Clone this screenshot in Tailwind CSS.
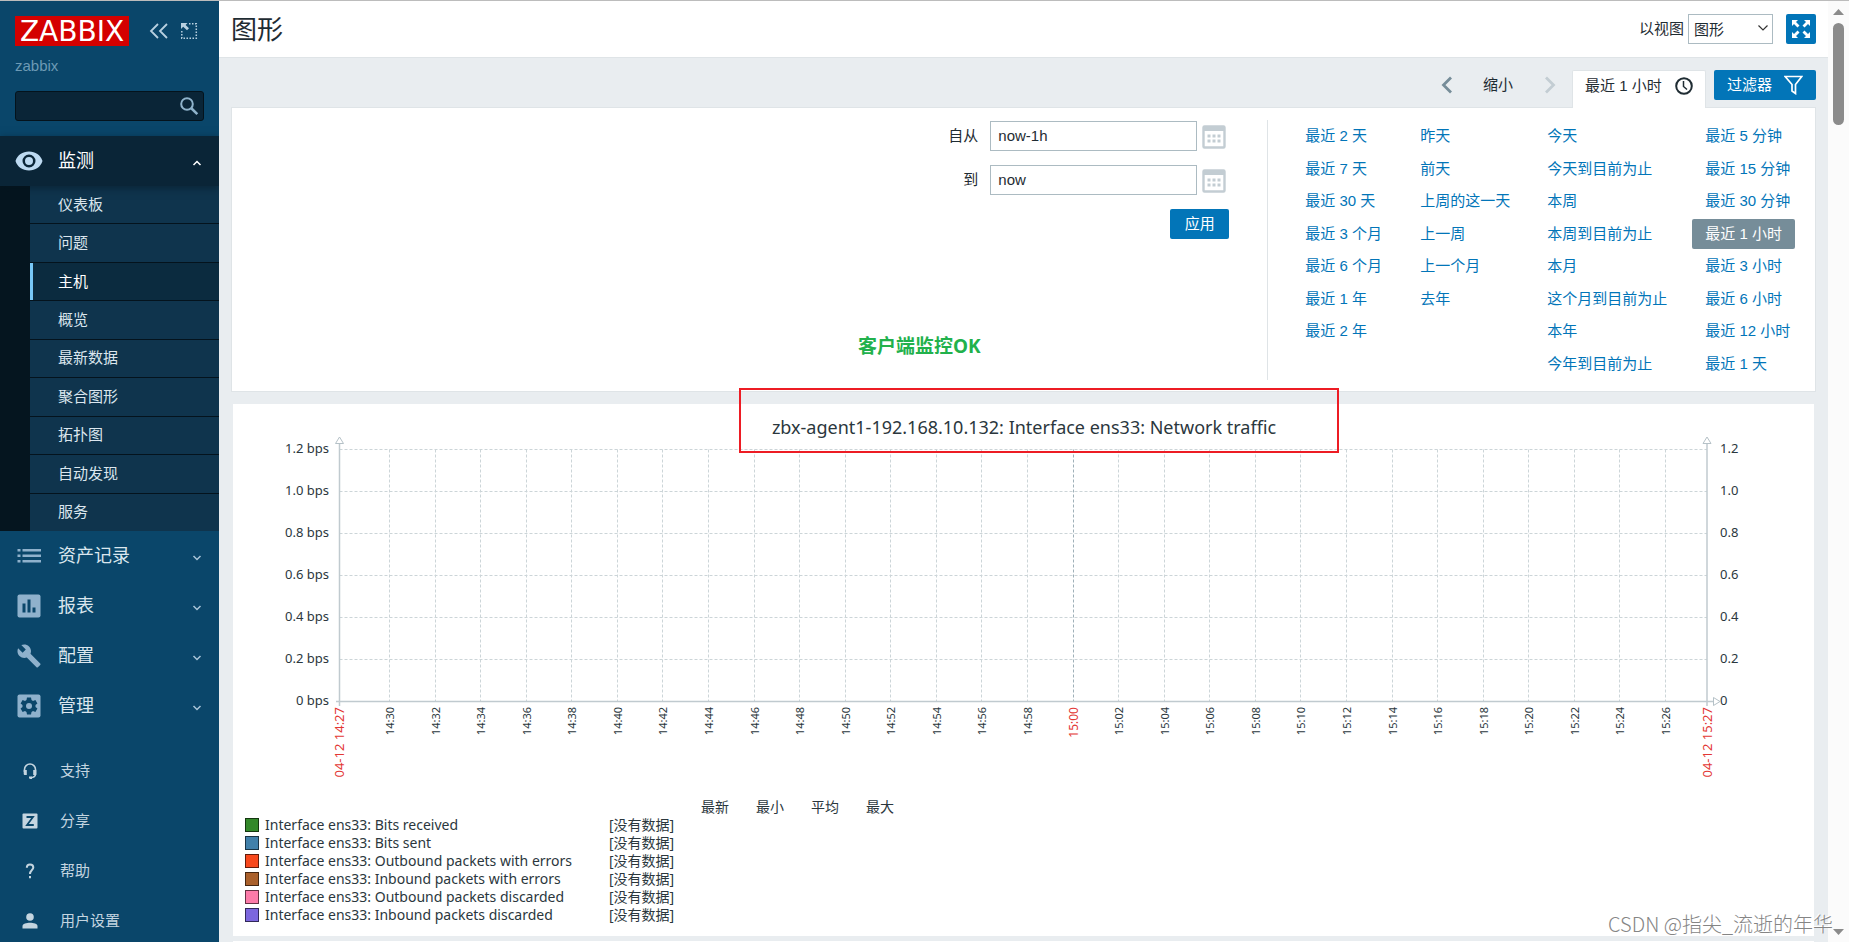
<!DOCTYPE html>
<html lang="zh-CN">
<head>
<meta charset="utf-8">
<title>图形</title>
<script src="https://cdn.jsdelivr.net/npm/@tailwindcss/browser@4"></script>
</head>
<body class="h-screen overflow-hidden border-t border-[#bcbcbc] bg-[#e9edf0] font-['Liberation_Sans','Noto_Sans_CJK_SC',sans-serif] text-[15px] leading-5 text-[#1f2c33]">
<div class="flex h-full">

  <!-- Sidebar -->
  <aside class="flex w-[219px] shrink-0 flex-col overflow-hidden bg-[#0a466a] text-[#dbe6ee]">
    <div class="flex items-center px-[15px] pt-[15px]">
      <a href="#" class="flex h-[30px] w-[114px] items-center justify-center bg-[#d40000] pt-px font-['DejaVu_Sans',sans-serif] text-[28px] leading-none text-white">ZABBIX</a>
      <button type="button" aria-label="收起" class="ml-5">
        <svg class="block" width="20" height="18" viewBox="0 0 20 18" fill="none" stroke="#b8d0e0" stroke-width="1.8"><path d="M9 2 2 9l7 7M18 2l-7 7 7 7"/></svg>
      </button>
      <button type="button" aria-label="隐藏" class="ml-[11px]">
        <svg class="block" width="18" height="18" viewBox="0 0 18 18" fill="none" stroke="#b8d0e0" stroke-width="1.5"><path stroke-dasharray="1.5 1.5" d="M9 1.8h7.3v14.4H1.8V9"/><path fill="#b8d0e0" stroke="none" d="M1 1h6.500L5.600 2.900 9 6.300 7 8.200 3.200 4.800 1 7z"/></svg>
      </button>
    </div>
    <div class="mt-[10px] px-[15px] text-[#6d9ab5]">zabbix</div>
    <form class="relative mx-[15px] mt-[15px]" onsubmit="return false">
      <input type="search" aria-label="搜索" class="block h-[30px] w-full rounded-[3px] border border-[#04131c] bg-[#0a2537] px-2 pr-8 text-white outline-none">
      <button type="submit" aria-label="搜索" class="absolute top-[5px] right-[5px]">
        <svg class="block" width="20" height="20" viewBox="0 0 20 20" fill="none" stroke="#8fb3cb" stroke-width="2"><circle cx="8" cy="8" r="5.800"/><path stroke-width="2.600" d="m12.300 12.300 6 5.800"/></svg>
      </button>
    </form>

    <nav class="mt-[15px]">
      <a href="#" class="relative z-10 flex h-[50px] items-center bg-[#0a2537] pr-[17px] pl-[15px] text-[18px] text-white shadow-[0_2px_8px_rgba(4,19,29,0.5)]">
        <svg width="28" height="20" viewBox="0 0 28 20"><path fill="#bddaf1" fill-rule="evenodd" d="M14 .5C7.500.5 2.500 4 .5 10c2 6 7 9.500 13.500 9.500S25.500 16 27.500 10C25.500 4 20.500.5 14 .5zm0 16A6.500 6.500 0 1 1 14 3.500a6.500 6.500 0 0 1 0 13zM14 6a4 4 0 1 0 0 8 4 4 0 0 0 0-8z"/></svg>
        <span class="ml-[15px] flex-1">监测</span>
        <svg class="mt-1" width="10" height="8" viewBox="0 0 10 8" fill="none" stroke="#fff" stroke-width="1.500"><path d="m1.500 6 3.500-3.500L8.500 6"/></svg>
      </a>
      <ul class="flex h-[345px] flex-col border-l-[30px] border-[#05151f] bg-[#0f344d]">
        <li class="flex flex-1 border-b border-[#04131d]"><a href="#" class="flex flex-1 items-center pl-7">仪表板</a></li>
        <li class="flex flex-1 border-b border-[#04131d]"><a href="#" class="flex flex-1 items-center pl-7">问题</a></li>
        <li class="flex flex-1 border-b border-[#04131d]"><a href="#" class="flex flex-1 items-center border-l-[3px] border-[#78c8f8] bg-[#0b2b3f] pl-[25px] text-white">主机</a></li>
        <li class="flex flex-1 border-b border-[#04131d]"><a href="#" class="flex flex-1 items-center pl-7">概览</a></li>
        <li class="flex flex-1 border-b border-[#04131d]"><a href="#" class="flex flex-1 items-center pl-7">最新数据</a></li>
        <li class="flex flex-1 border-b border-[#04131d]"><a href="#" class="flex flex-1 items-center pl-7">聚合图形</a></li>
        <li class="flex flex-1 border-b border-[#04131d]"><a href="#" class="flex flex-1 items-center pl-7">拓扑图</a></li>
        <li class="flex flex-1 border-b border-[#04131d]"><a href="#" class="flex flex-1 items-center pl-7">自动发现</a></li>
        <li class="flex flex-1"><a href="#" class="flex flex-1 items-center pl-7">服务</a></li>
      </ul>
      <a href="#" class="flex h-[50px] items-center pr-[17px] pl-[17px] text-[18px]">
        <svg width="24" height="24" viewBox="0 0 24 24" fill="#8fb1cc"><path d="M.5 5h3v2.500h-3zM5.500 5H24v2.500H5.500zM.5 10.500h3V13h-3zM5.500 10.500H24V13H5.500zM.5 16h3v2.500h-3zM5.500 16H24v2.500H5.500z"/></svg>
        <span class="ml-[17px] flex-1">资产记录</span>
        <svg class="mt-1" width="10" height="8" viewBox="0 0 10 8" fill="none" stroke="#a9c5d8" stroke-width="1.500"><path d="M1.500 2 5 5.500 8.500 2"/></svg>
      </a>
      <a href="#" class="flex h-[50px] items-center pr-[17px] pl-[17px] text-[18px]">
        <svg width="24" height="24" viewBox="0 0 24 24"><rect x=".5" y=".5" width="23" height="23" rx="2" fill="#8fb1cc"/><path fill="#0a466a" d="M5.500 9.500h3v9h-3zM10.500 5.500h3v13h-3zM15.500 13.500h3v5h-3z"/></svg>
        <span class="ml-[17px] flex-1">报表</span>
        <svg class="mt-1" width="10" height="8" viewBox="0 0 10 8" fill="none" stroke="#a9c5d8" stroke-width="1.500"><path d="M1.500 2 5 5.500 8.500 2"/></svg>
      </a>
      <a href="#" class="flex h-[50px] items-center pr-[17px] pl-[17px] text-[18px]">
        <svg width="24" height="24" viewBox="0 0 24 24" fill="#8fb1cc"><path d="M23.200 19.500 13.500 9.800c1-2.400.5-5.300-1.500-7.300C9.900.4 6.800 0 4.300 1.100l4.500 4.500-3.200 3.200L1.100 4.300C-.1 6.800.4 9.900 2.500 12c2 2 4.900 2.500 7.300 1.500l9.700 9.700c.4.400 1 .4 1.400 0l2.300-2.200c.4-.4.4-1.100 0-1.500z"/></svg>
        <span class="ml-[17px] flex-1">配置</span>
        <svg class="mt-1" width="10" height="8" viewBox="0 0 10 8" fill="none" stroke="#a9c5d8" stroke-width="1.500"><path d="M1.500 2 5 5.500 8.500 2"/></svg>
      </a>
      <a href="#" class="flex h-[50px] items-center pr-[17px] pl-[17px] text-[18px]">
        <svg width="24" height="24" viewBox="0 0 24 24"><rect x=".5" y=".5" width="23" height="23" rx="2" fill="#8fb1cc"/><path fill="#0a466a" d="M10 3.500h4l.5 2.500 1.500.9 2.400-.9 2 3.500-1.900 1.600v1.800l1.900 1.600-2 3.500-2.400-.9-1.500.9-.5 2.500h-4L9.500 18 8 17.100l-2.400.9-2-3.500 1.900-1.600v-1.800L3.600 9.500l2-3.500 2.400.9L9.500 6z"/><circle cx="12" cy="12" r="3" fill="#8fb1cc"/></svg>
        <span class="ml-[17px] flex-1">管理</span>
        <svg class="mt-1" width="10" height="8" viewBox="0 0 10 8" fill="none" stroke="#a9c5d8" stroke-width="1.500"><path d="M1.500 2 5 5.500 8.500 2"/></svg>
      </a>
    </nav>

    <nav class="mt-[15px] text-[#c4d5e0]">
      <a href="#" class="flex h-[50px] items-center pl-[22px]">
        <svg width="16" height="16" viewBox="0 0 16 16" fill="none" stroke="#c4d5e0" stroke-width="1.600"><path d="M2.500 9V6.500a5.500 5.500 0 0 1 11 0V11c0 2-1.500 3.500-5 3.700"/><path fill="#c4d5e0" stroke="none" d="M1.700 7h3.100v5H3c-.8 0-1.300-.6-1.300-1.300zM11.200 7h3.100v5h-3.100zM7 13.500h3V16H8.300C7.500 16 7 15.400 7 14.800z"/></svg>
        <span class="ml-[22px]">支持</span>
      </a>
      <a href="#" class="flex h-[50px] items-center pl-[22px]">
        <svg width="16" height="16" viewBox="0 0 16 16"><rect x=".5" y=".5" width="15" height="15" rx="1" fill="#c4d5e0"/><path fill="none" stroke="#0a466a" stroke-width="1.800" d="M4.500 4h6.500L5 12h6.800"/></svg>
        <span class="ml-[22px]">分享</span>
      </a>
      <a href="#" class="flex h-[50px] items-center pl-[22px]">
        <svg width="16" height="16" viewBox="0 0 16 16" fill="none" stroke="#c4d5e0" stroke-width="2"><path d="M4.800 4.800C4.800 2.600 6 1.500 8 1.500s3.300 1.200 3.300 2.900C11.300 7 8 7 8 11"/><path d="M8 13v2.300"/></svg>
        <span class="ml-[22px]">帮助</span>
      </a>
      <a href="#" class="flex h-[50px] items-center pl-[22px]">
        <svg width="16" height="16" viewBox="0 0 16 16" fill="#c4d5e0"><circle cx="8" cy="4" r="3.800"/><path d="M.5 15.500V13c0-2 4-3.200 7.500-3.200s7.500 1.200 7.500 3.200v2.500z"/></svg>
        <span class="ml-[22px]">用户设置</span>
      </a>
    </nav>
  </aside>

  <!-- Content -->
  <main class="min-w-0 flex-1 overflow-hidden">
    <header class="flex h-[57px] items-center border-b border-[#dfe4e7] bg-white px-3">
      <h1 class="flex-1 pt-[2px] text-[26px] leading-8">图形</h1>
      <label for="view" class="mr-1">以视图</label>
      <div class="relative">
        <select id="view" class="block h-[30px] w-[85px] appearance-none border border-[#acbbc2] bg-white px-[5px] leading-none outline-none">
          <option>图形</option><option>值</option>
        </select>
        <svg class="pointer-events-none absolute top-[10px] right-[5px]" width="10" height="8" viewBox="0 0 10 8" fill="none" stroke="#333" stroke-width="1.200"><path d="M.5 1.500 5 6l4.500-4.500"/></svg>
      </div>
      <button type="button" aria-label="全屏" class="ml-[13px] flex h-[30px] w-[30px] items-center justify-center rounded-[2px] bg-[#0275b8]">
        <svg width="18" height="18" viewBox="0 0 18 18" fill="#fff"><path d="M0 0h6L4 2l3.500 3.500-2 2L2 4 0 6z"/><path d="M18 0v6l-2-2-3.500 3.500-2-2L14 2l-2-2zM0 18v-6l2 2 3.500-3.500 2 2L4 16l2 2zM18 18h-6l2-2-3.500-3.500 2-2L16 14l2-2z"/></svg>
      </button>
    </header>

    <!-- Time navigation -->
    <div class="flex items-start justify-end px-3 pt-3">
      <div class="flex h-[30px] items-center">
        <button type="button" aria-label="上一段" class="mr-[30px]"><svg class="block" width="12" height="18" viewBox="0 0 12 18" fill="none" stroke="#768d99" stroke-width="2.800"><path d="m10 1.500-7.500 7.500 7.500 7.500"/></svg></button>
        <button type="button">缩小</button>
        <button type="button" aria-label="下一段" class="mr-4 ml-[31px]"><svg class="block" width="12" height="18" viewBox="0 0 12 18" fill="none" stroke="#c3cdd3" stroke-width="2.800"><path d="m2 1.500 7.500 7.500L2 16.500"/></svg></button>
      </div>
      <button type="button" class="relative z-10 -mb-px flex h-[38px] w-[134px] items-center justify-between rounded-t-[2px] border border-b-0 border-[#dfe4e7] bg-white px-3 pb-2">最近 1 小时
        <svg width="18" height="18" viewBox="0 0 18 18" fill="none" stroke="#1f2c33" stroke-width="2"><circle cx="9" cy="9" r="7.800"/><path stroke-width="1.500" d="M8.500 4v5.500l3.500 3"/></svg>
      </button>
      <button type="button" class="ml-2 flex h-[30px] items-center rounded-[2px] bg-[#0275b8] px-[13px] text-white">过滤器
        <svg class="ml-3" width="19" height="20" viewBox="0 0 19 20" fill="none" stroke="#fff" stroke-width="1.700"><path d="M1.200 1.500h16.600L11.500 9.500v9L8 16V9.500z"/></svg>
      </button>
    </div>

    <section class="relative mx-3 flex h-[285px] justify-end border border-[#dfe4e7] bg-white pt-3 pr-5">
      <p class="absolute top-[226px] left-[626px] font-['Noto_Sans','Noto_Sans_CJK_SC',sans-serif] text-[19px] leading-6 font-bold text-[#22b14c]">客户端监控OK</p>
      <form class="mr-[38px] flex flex-col gap-[14px] pt-px" onsubmit="return false">
        <div class="flex h-[30px] items-center justify-end">
          <label for="from" class="mr-3">自从</label>
          <input id="from" value="now-1h" class="h-[30px] w-[207px] border border-[#acbbc2] px-[7px] pb-[2px] outline-none">
          <button type="button" aria-label="日历" class="mt-[2px] mr-[3px] ml-[5px]"><svg class="block" width="24" height="24" viewBox="0 0 24 24"><rect x="1.500" y="1.500" width="21" height="21" rx="1" fill="#fff" stroke="#c3cdd3" stroke-width="2.400"/><path fill="#c3cdd3" d="M1 1h22v5H1zM5.500 9.500h3v3h-3zM10.500 9.500h3v3h-3zM15.500 9.500h3v3h-3zM5.500 14.500h3v3h-3zM10.500 14.500h3v3h-3zM15.500 14.500h3v3h-3z"/></svg></button>
        </div>
        <div class="flex h-[30px] items-center justify-end">
          <label for="to" class="mr-3">到</label>
          <input id="to" value="now" class="h-[30px] w-[207px] border border-[#acbbc2] px-[7px] pb-[2px] outline-none">
          <button type="button" aria-label="日历" class="mt-[2px] mr-[3px] ml-[5px]"><svg class="block" width="24" height="24" viewBox="0 0 24 24"><rect x="1.500" y="1.500" width="21" height="21" rx="1" fill="#fff" stroke="#c3cdd3" stroke-width="2.400"/><path fill="#c3cdd3" d="M1 1h22v5H1zM5.500 9.500h3v3h-3zM10.500 9.500h3v3h-3zM15.500 9.500h3v3h-3zM5.500 14.500h3v3h-3zM10.500 14.500h3v3h-3zM15.500 14.500h3v3h-3z"/></svg></button>
        </div>
        <button type="submit" class="h-[30px] w-[59px] self-end rounded-[2px] bg-[#0275b8] text-white">应用</button>
      </form>
      <div class="grid h-[260px] grid-flow-col grid-cols-[115px_127px_145px_auto] grid-rows-8 items-center border-l border-[#dfe4e7] pl-[37px] text-[#0275b8]">
        <a href="#">最近 2 天</a><a href="#">最近 7 天</a><a href="#">最近 30 天</a><a href="#">最近 3 个月</a><a href="#">最近 6 个月</a><a href="#">最近 1 年</a><a href="#">最近 2 年</a><span></span>
        <a href="#">昨天</a><a href="#">前天</a><a href="#">上周的这一天</a><a href="#">上一周</a><a href="#">上一个月</a><a href="#">去年</a><span></span><span></span>
        <a href="#">今天</a><a href="#">今天到目前为止</a><a href="#">本周</a><a href="#">本周到目前为止</a><a href="#">本月</a><a href="#">这个月到目前为止</a><a href="#">本年</a><a href="#">今年到目前为止</a>
        <a href="#" class="px-[13px]">最近 5 分钟</a><a href="#" class="pl-[13px]">最近 15 分钟</a><a href="#" class="pl-[13px]">最近 30 分钟</a><a href="#" class="justify-self-start rounded-[2px] bg-[#768d99] px-[13px] py-[5px] text-white">最近 1 小时</a><a href="#" class="px-[13px]">最近 3 小时</a><a href="#" class="px-[13px]">最近 6 小时</a><a href="#" class="pl-[13px]">最近 12 小时</a><a href="#" class="px-[13px]">最近 1 天</a>
      </div>
    </section>

    <!-- Graph -->
    <section class="relative mx-[14px] mt-3 bg-white pb-3 font-['Noto_Sans','Noto_Sans_CJK_SC',sans-serif] text-[#2b373d]">
      <div class="absolute -top-4 left-[506px] z-10 h-[65px] w-[600px] border-2 border-[#ed1c24]"></div>
      <svg id="graph" class="block h-auto w-full" viewBox="0 0 1581 394" role="img" aria-label="Network traffic"></svg>
      <table class="ml-3 border-separate border-spacing-0 text-[14px] leading-[18px]">
        <thead>
          <tr><th class="w-[364px]"></th><th class="w-[92px]"></th><th class="w-[55px] text-left font-normal">最新</th><th class="w-[55px] text-left font-normal">最小</th><th class="w-[55px] text-left font-normal">平均</th><th class="w-[55px] text-left font-normal">最大</th></tr>
        </thead>
        <tbody id="legend"></tbody>
      </table>
    </section>
    <section class="mx-[14px] mt-[5px] h-10 bg-white"></section>
  </main>

  <!-- Scrollbar -->
  <div class="flex w-[21px] shrink-0 flex-col items-center justify-between bg-[#fbfbfb] pt-2 pb-[7px]">
    <div class="flex flex-col items-center gap-2">
      <svg width="11" height="6" viewBox="0 0 11 6" fill="#8b8b8b"><path d="M5.500 0 11 6H0z"/></svg>
      <div class="h-[102px] w-[11px] rounded-full bg-[#8b8b8b]"></div>
    </div>
    <svg width="11" height="6" viewBox="0 0 11 6" fill="#8b8b8b"><path d="M0 0h11L5.500 6z"/></svg>
  </div>
</div>

<div class="absolute right-4 bottom-1 font-['Noto_Sans_CJK_SC',sans-serif] text-[20px] leading-7 font-light text-[#858585] [text-shadow:-1px_-1px_0_#fff]">CSDN @指尖_流逝的年华</div>

<script>
const X0 = 106.5, X1 = 1474, Y0 = 45.5, Y1 = 297.5;
let s = `<text x="791" y="30" text-anchor="middle" class="fill-[#2b373d] text-[18px]">zbx-agent1-192.168.10.132: Interface ens33: Network traffic</text>`;
['1.2', '1.0', '0.8', '0.6', '0.4', '0.2', '0'].forEach((v, i) => {
  const y = Math.round(45 + i * 42) + 0.5;
  if (i < 6) s += `<path d="M${X0} ${y}H${X1}" stroke="#ccd5d8" stroke-dasharray="3 2"/>`;
  s += `<text x="96" y="${y + 3.5}" text-anchor="end" class="fill-[#2b373d] text-[13px]">${v} bps</text>`;
  s += `<text x="1487" y="${y + 3.5}" class="fill-[#2b373d] text-[13px]">${v}</text>`;
});
for (let i = 0; i < 29; i++) {
  const x = Math.floor(156.5 + i * 45.57) + 0.5, m = 30 + i * 2, hour = m === 60;
  const label = (m < 60 ? '14:' : '15:') + String(m % 60).padStart(2, '0');
  s += `<path d="M${x} ${Y0}V${Y1}" stroke="${hour ? '#9fb0b8' : '#ccd5d8'}" stroke-dasharray="3 2"/>`;
  s += `<text transform="translate(${x + 4} 303) rotate(-90)" text-anchor="end" class="${hour ? 'fill-[#e33734] text-[12px]' : 'fill-[#2b373d] text-[11px]'}">${label}</text>`;
}
[[X0, '04-12 14:27'], [X1, '04-12 15:27']].forEach(([x, t]) => {
  s += `<path d="M${x} 40V302" stroke="#c0cacf" stroke-width="1.5"/><path d="M${x - 4} 39.500h8L${x} 33z" fill="#fff" stroke="#b5c1c7"/>`;
  s += `<text transform="translate(${x + 4.5} 303) rotate(-90)" text-anchor="end" class="fill-[#e33734] text-[13px]">${t}</text>`;
});
s += `<path d="M103 297.500H1480" stroke="#c0cacf" stroke-width="1.500"/><path d="M1480.500 293.500v8l6.500-4z" fill="#fff" stroke="#b5c1c7"/>`;
document.getElementById('graph').innerHTML = s;

document.getElementById('legend').innerHTML = [
  ['#33882a', 'Bits received'], ['#4180aa', 'Bits sent'], ['#f8481c', 'Outbound packets with errors'],
  ['#aa602b', 'Inbound packets with errors'], ['#fc7ba9', 'Outbound packets discarded'], ['#7c67de', 'Inbound packets discarded']
].map(([c, t]) => `<tr><td class="p-0"><div class="flex items-center"><span class="mr-[6px] inline-block h-[14px] w-[14px] border border-black/60" style="background:${c}"></span>Interface ens33: ${t}</div></td><td class="p-0">[没有数据]</td></tr>`).join('');
</script>
</body>
</html>
